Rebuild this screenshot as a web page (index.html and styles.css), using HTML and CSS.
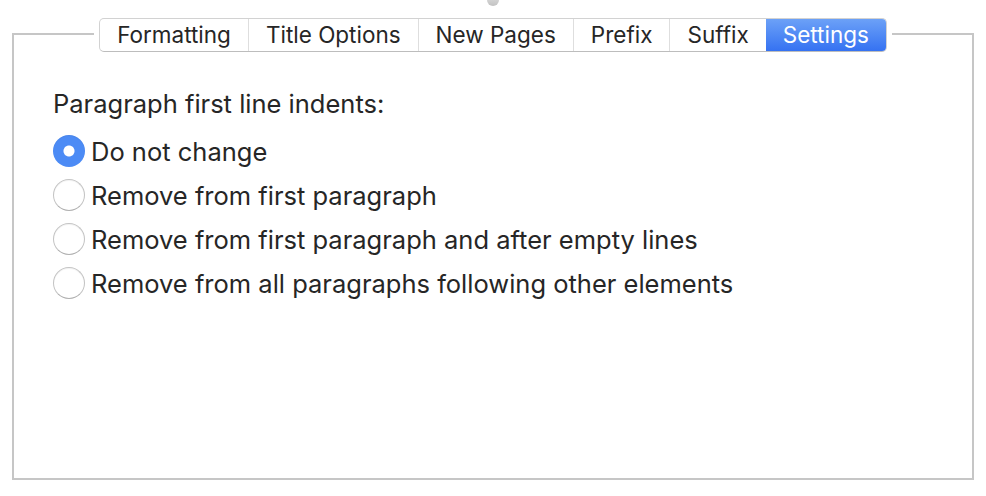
FILE: index.html
```html
<!DOCTYPE html>
<html>

<head>
    <link rel="stylesheet" href="styles.css">
</head>

<body>
    <div class="knob"></div>
    <div class="panel">
        <div class="tabbar">
            <div class="tabs">
                <div class="tab">Formatting</div>
                <div class="tab">Title Options</div>
                <div class="tab">New Pages</div>
                <div class="tab">Prefix</div>
                <div class="tab">Suffix</div>
                <div class="tab active">Settings</div>
            </div>
        </div>
        <div class="content">
            <p class="label">Paragraph first line indents:</p>
            <div class="option">
                <span class="radio checked"></span>
                <span>Do not change</span>
            </div>
            <div class="option">
                <span class="radio"></span>
                <span>Remove from first paragraph</span>
            </div>
            <div class="option">
                <span class="radio"></span>
                <span>Remove from first paragraph and after empty lines</span>
            </div>
            <div class="option">
                <span class="radio"></span>
                <span>Remove from all paragraphs following other elements</span>
            </div>
        </div>
    </div>
</body>

</html>
```

FILE: styles.css
```css
body {
    margin: 0;
    background: #ffffff;
    font-family: Inter, "Noto Sans", sans-serif;
    color: #262626;
    font-size: 25.5px;
}

.knob {
    width: 12px;
    height: 12px;
    margin: -6px auto 0;
    border-radius: 50%;
    background: linear-gradient(#e2e2e2, #c2c2c2);
}

.panel {
    margin: 27px 12px 0;
    height: 443px;
    border: 2px solid #c6c6c6;
}

.tabbar {
    display: flex;
    justify-content: center;
    margin-top: -17px;
}

.tabs {
    display: flex;
    height: 32px;
    font-size: 22.5px;
    background: #ffffff;
    border: 1px solid #d2d2d2;
    border-bottom-color: #bdbdbd;
    border-radius: 5px;
    box-shadow: 0 0 0 5px #ffffff;
    overflow: hidden;
}

.tab {
    padding: 0 17px;
    line-height: 31px;
    border-left: 1px solid #dedede;
}

.tab:first-child {
    border-left: none;
}

.tab.active {
    color: #ffffff;
    border-left: none;
    background: linear-gradient(#6ca1f7, #3572f2);
}

.content {
    padding: 37px 0 0 39px;
}

.label {
    margin: 0 0 10px;
    line-height: 30px;
}

.option {
    display: flex;
    align-items: center;
    gap: 6px;
    height: 44px;
}

.radio {
    width: 30px;
    height: 30px;
    border-radius: 50%;
    border: 1px solid #c4c4c4;
    border-bottom-color: #b0b0b0;
    background: #ffffff;
    box-shadow: inset 0 1px 1px rgba(0, 0, 0, 0.05);
}

.radio.checked {
    width: 32px;
    height: 32px;
    border: none;
    background: radial-gradient(circle, #ffffff 5px, #4c8bf5 6px);
}
```
